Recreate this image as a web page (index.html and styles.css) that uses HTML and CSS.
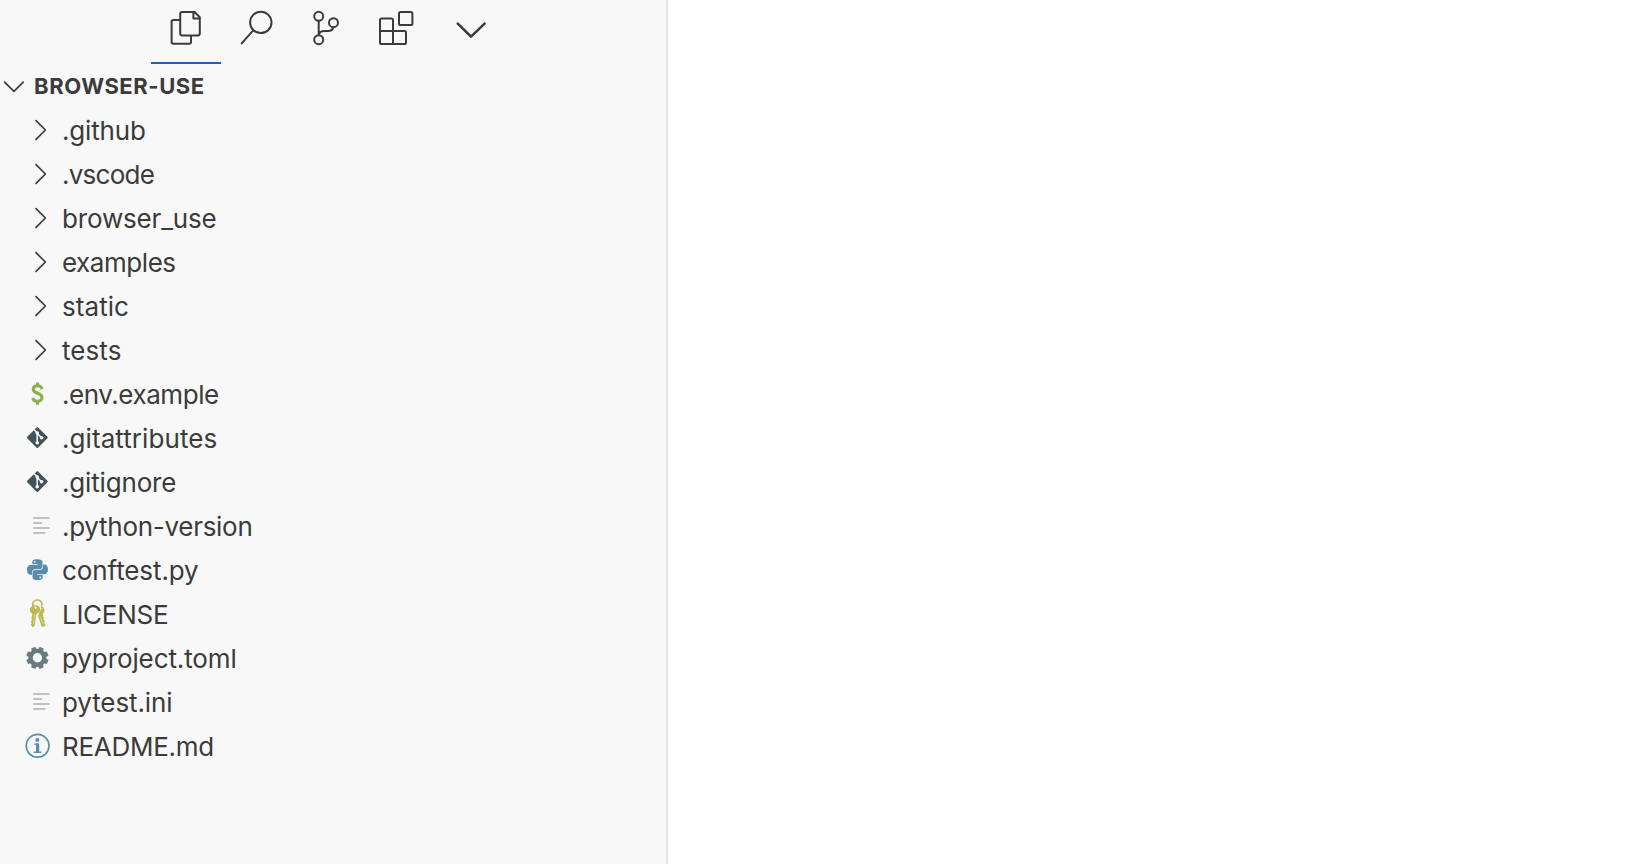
FILE: index.html
```html
<!DOCTYPE html>
<html lang="en">
<head>
<meta charset="utf-8">
<title>Explorer</title>
<link rel="stylesheet" href="styles.css">
</head>
<body>
<svg class="symbols" aria-hidden="true">
  <symbol id="chevron" viewBox="0 0 62 44"><path class="line" d="M36 12.7 45.4 22 36 31.3"/></symbol>
  <symbol id="dollar" viewBox="0 0 62 44"><g fill="none" stroke="#8dae4e" stroke-width="3.1"><path d="M42 17.2C41.4 14.6 39.8 13.8 37.5 13.8C34.9 13.8 33.3 15.1 33.3 17.2C33.3 22.3 42 20.2 42 25.6C42 28 40 29.4 37.5 29.4C34.9 29.4 33.2 28.2 32.9 25.7"/><path d="M37.5 10.5V14M37.5 29V32.7"/></g></symbol>
  <symbol id="git" viewBox="0 0 62 44"><rect x="29.7" y="13.9" width="15.3" height="15.3" rx="1" fill="#41535b" transform="rotate(45 37.35 21.55)"/><g stroke="#f8f8f8" stroke-width="1.5" fill="none"><path d="M33.2 12.8 37.2 16.8V27M37.2 17.5 41.8 22"/></g><g fill="#f8f8f8"><circle cx="37.2" cy="17" r="1.8"/><circle cx="37.2" cy="26.8" r="1.8"/><circle cx="41.6" cy="21.8" r="1.8"/></g></symbol>
  <symbol id="text" viewBox="0 0 62 44"><path d="M33.2 14H49.7M33.2 19H42.2M33.2 24H49.7M33.2 29H45.5" stroke="#c0c2c2" stroke-width="2"/></symbol>
  <symbol id="python" viewBox="0 0 62 44"><g fill="#5a8dac"><path d="M32.3 16.2V13.7C32.3 11.8 34.4 11.2 37.4 11.2C40.6 11.2 42.5 12 42.5 13.8V18.5C42.5 20.3 41.2 21.3 39.5 21.3H35.2C33.1 21.3 32 22.6 32 24.5V26.8H30.2C28.1 26.8 27 24.8 27 21.6C27 18.4 28.4 16.9 30.6 16.9H37.8V16.2Z"/><path transform="rotate(180 37.5 21.6)" d="M32.3 16.2V13.7C32.3 11.8 34.4 11.2 37.4 11.2C40.6 11.2 42.5 12 42.5 13.8V18.5C42.5 20.3 41.2 21.3 39.5 21.3H35.2C33.1 21.3 32 22.6 32 24.5V26.8H30.2C28.1 26.8 27 24.8 27 21.6C27 18.4 28.4 16.9 30.6 16.9H37.8V16.2Z"/></g><g fill="#f8f8f8"><circle cx="34.7" cy="13.8" r=".9"/><circle cx="40.3" cy="29.4" r=".9"/></g></symbol>
  <symbol id="keys" viewBox="0 0 62 44"><path d="M33 14C31.8 10.5 34.2 8 37.4 8C41 8 43 11 41.7 14.4" fill="none" stroke="#bcb751" stroke-width="1.6"/><g fill="#bcb751"><path d="M35 13.3C38.4 12.7 40.6 15.2 40 18.2C39.7 20.1 38.2 21.2 36.5 21.7L34.5 34 32.8 35.3 30.8 33 31.7 31 30.9 29.4 32 27.7 31.4 26 32.5 21.8C30.3 20.7 29.3 18.6 30.1 16.5C30.8 14.6 32.4 13.5 35 13.3Z"/><path d="M40.8 14.3C43.7 14.8 45.2 17.3 44.1 20L42.7 22.3 43.8 26.2 43.2 27.5 44.8 29.3 44.1 30.7 45.6 33.2 43.2 35.1 41.4 34 38.1 24 39.2 20.5C40.8 18.7 41.3 16.4 40.8 14.3Z"/></g><g fill="#f8f8f8"><circle cx="35.7" cy="15.7" r="1.1"/><circle cx="41.9" cy="16.6" r=".5"/></g><path d="M34.7 22 33.4 32M39.9 24 43 32.5" stroke="#f8f8f8" stroke-width=".4"/></symbol>
  <symbol id="gear" viewBox="0 0 62 44"><g transform="translate(37.4 21.8)"><circle r="6.9" fill="none" stroke="#6a7a80" stroke-width="4.4"/><g transform="rotate(22.5)" fill="#6a7a80"><path d="M-2.6-8 -2.2-11.1H2.2L2.6-8ZM-2.6 8-2.2 11.1H2.2L2.6 8ZM-8-2.6-11.1-2.2V2.2L-8 2.6ZM8-2.6 11.1-2.2V2.2L8 2.6Z"/><path transform="rotate(45)" d="M-2.6-8 -2.2-11.1H2.2L2.6-8ZM-2.6 8-2.2 11.1H2.2L2.6 8ZM-8-2.6-11.1-2.2V2.2L-8 2.6ZM8-2.6 11.1-2.2V2.2L8 2.6Z"/></g></g></symbol>
  <symbol id="info" viewBox="0 0 62 44"><circle cx="37.6" cy="21.8" r="11.4" fill="none" stroke="#5a8dac" stroke-width="1.7"/><circle cx="37.3" cy="16" r="2" fill="#5a8dac"/><path d="M34 20.1H37.8V28.3M33.8 28.3H41.5" fill="none" stroke="#5a8dac" stroke-width="1.4"/><path d="M37.6 19.5V28.6" stroke="#5a8dac" stroke-width="3.2"/></symbol>
</svg>
<div class="window">
  <aside class="sidebar">
    <nav class="views">
      <button class="view active" aria-label="Explorer"><svg viewBox="151 0 70 64"><path class="line" d="M180 20H173.4Q171.6 20 171.6 21.8V42Q171.6 43.8 173.4 43.8H189.2Q191 43.8 191 42V35.6M182 12H194.6L199.8 17.2V33.6Q199.8 35.4 198 35.4H182Q180.2 35.4 180.2 33.6V13.8Q180.2 12 182 12ZM193.4 12V18.6H199.8"/></svg></button>
      <button class="view" aria-label="Search"><svg viewBox="221 0 70 64"><g class="line"><circle cx="260.8" cy="22.4" r="10.7"/><path d="M253.2 30.4 241.7 43.4"/></g></svg></button>
      <button class="view" aria-label="Source Control"><svg viewBox="291 0 70 64"><g class="line"><circle cx="318.7" cy="16.3" r="4.5"/><circle cx="318.7" cy="39.7" r="4.5"/><circle cx="333.5" cy="22.7" r="4.5"/><path d="M318.7 20.8V35.2M333.2 27.2C332.6 30 330.5 31 328 31H324.5C321.5 31 319.2 32.2 318.7 35.2"/></g></svg></button>
      <button class="view" aria-label="Extensions"><svg viewBox="361 0 70 64"><g class="line"><path d="M381.6 18.5H391.4Q393 18.5 393 20V31H404.4Q406 31 406 32.6V42.4Q406 44 404.4 44H381.6Q380 44 380 42.4V20Q380 18.5 381.6 18.5ZM380 31H393V44"/><rect x="399" y="12" width="13.4" height="13" rx="1.6"/></g></svg></button>
      <button class="view more" aria-label="More"><svg viewBox="431 0 80 64"><path class="line thick" d="M457.8 23.6 471 36.6 484.6 23.6"/></svg></button>
    </nav>
    <header class="root"><svg class="twistie" viewBox="0 0 34 44"><path class="line" d="M4.6 18.1 13.9 27.3 23.2 18.1"/></svg><h2>BROWSER-USE</h2></header>
    <ul class="tree">
      <li class="snug"><svg><use href="#chevron"/></svg><span>.github</span></li>
      <li class="tightest"><svg><use href="#chevron"/></svg><span>.vscode</span></li>
      <li class="snug"><svg><use href="#chevron"/></svg><span>browser_use</span></li>
      <li class="tight"><svg><use href="#chevron"/></svg><span>examples</span></li>
      <li class="wide"><svg><use href="#chevron"/></svg><span>static</span></li>
      <li class="wide"><svg><use href="#chevron"/></svg><span>tests</span></li>
      <li class="tight"><svg><use href="#dollar"/></svg><span>.env.example</span></li>
      <li class="wide"><svg><use href="#git"/></svg><span>.gitattributes</span></li>
      <li class="snug"><svg><use href="#git"/></svg><span>.gitignore</span></li>
      <li><svg><use href="#text"/></svg><span>.python-version</span></li>
      <li class="loose"><svg><use href="#python"/></svg><span>conftest.py</span></li>
      <li><svg><use href="#keys"/></svg><span>LICENSE</span></li>
      <li class="loose"><svg><use href="#gear"/></svg><span>pyproject.toml</span></li>
      <li class="loose"><svg><use href="#text"/></svg><span>pytest.ini</span></li>
      <li><svg><use href="#info"/></svg><span>README.md</span></li>
    </ul>
  </aside>
  <main class="editor"></main>
</div>
</body>
</html>
```
FILE: styles.css
```css
* { box-sizing: border-box; }
body { margin: 0; background: #fff; color: #3b3b3b; font-family: Inter, "Liberation Sans", sans-serif; }
.symbols { display: none; }
.window { display: flex; height: 100vh; overflow: hidden; }
.sidebar { width: 668px; flex: none; background: #f8f8f8; border-right: 2px solid #e5e5e5; }
.editor { flex: 1; }
.views { display: flex; height: 64px; padding-left: 151px; }
.view { width: 70px; height: 64px; padding: 0; border: 0; background: none; }
.view.more { width: 80px; }
.view svg { display: block; width: 100%; height: 64px; }
.view.active { background: linear-gradient(#255fb5, #255fb5) 0 62px / 100% 2px no-repeat; }
.line { fill: none; stroke: #3b3b3b; stroke-width: 1.7; stroke-linecap: round; stroke-linejoin: round; }
.view .line { stroke-width: 2; }
.view .thick { stroke-width: 2.6; }
.root { display: flex; height: 44px; }
.twistie { width: 34px; height: 44px; }
.root h2 { margin: 0; font-size: 22px; line-height: 44px; font-weight: 700; letter-spacing: 0.57px; }
.tree { list-style: none; margin: 0; padding: 0; }
.tree li { display: flex; height: 44px; font-size: 26px; line-height: 46px; letter-spacing: -0.28px; }
.tree svg { width: 62px; height: 44px; flex: none; }
.tree span { white-space: nowrap; }
.tree .tightest { letter-spacing: -0.75px; }
.tree .tight { letter-spacing: -0.45px; }
.tree .snug { letter-spacing: -0.17px; }
.tree .loose { letter-spacing: -0.1px; }
.tree .wide { letter-spacing: 0.07px; }
```
